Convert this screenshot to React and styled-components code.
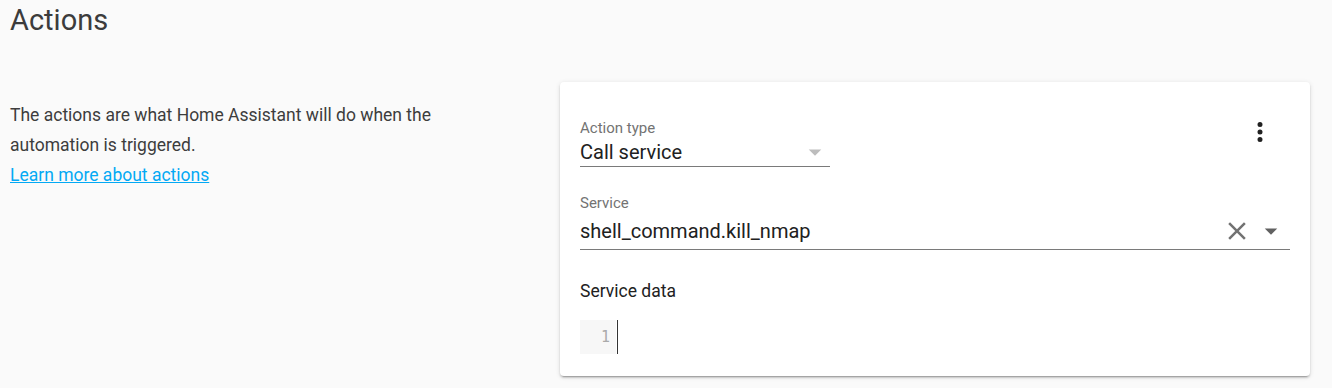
import React from 'react';
import styled, { createGlobalStyle } from 'styled-components';

const GlobalStyle = createGlobalStyle`
    body {
        margin: 0;
        background: #fafafa;
        font-family: Roboto, 'Liberation Sans', sans-serif;
    }
`

const DotsIcon = () => (
    <svg width="30" height="30" viewBox="0 0 24 24">
        <path fill="#212121" d="M12,16A2,2 0 0,1 14,18A2,2 0 0,1 12,20A2,2 0 0,1 10,18A2,2 0 0,1 12,16M12,10A2,2 0 0,1 14,12A2,2 0 0,1 12,14A2,2 0 0,1 10,12A2,2 0 0,1 12,10M12,4A2,2 0 0,1 14,6A2,2 0 0,1 12,8A2,2 0 0,1 10,6A2,2 0 0,1 12,4Z" />
    </svg>
)

const CloseIcon = () => (
    <svg width="30" height="30" viewBox="0 0 24 24">
        <path fill="#727272" d="M19,6.41L17.59,5L12,10.59L6.41,5L5,6.41L10.59,12L5,17.59L6.41,19L12,13.41L17.59,19L19,17.59L13.41,12L19,6.41Z" />
    </svg>
)

const ArrowIcon = ({ color }) => (
    <svg width="30" height="30" viewBox="0 0 24 24">
        <path fill={color} d="M7,10L12,15L17,10H7Z" />
    </svg>
)

const App = () => {
    return (
        <Page>
            <GlobalStyle />
            <Title>Actions</Title>
            <Section>
                <Intro>
                    The actions are what Home Assistant will do when the automation is triggered.
                    <br />
                    <Link href="#">Learn more about actions</Link>
                </Intro>
                <Card>
                    <TopRow>
                        <Field width="250px">
                            <Label>Action type</Label>
                            <InputRow height="28px">
                                <Value>Call service</Value>
                                <ArrowIcon color="#bdbdbd" />
                            </InputRow>
                        </Field>
                        <MenuButton><DotsIcon /></MenuButton>
                    </TopRow>
                    <Field width="100%" top="26px">
                        <Label>Service</Label>
                        <InputRow height="36px">
                            <Value>shell_command.kill_nmap</Value>
                            <IconGroup>
                                <CloseIcon />
                                <ArrowIcon color="#616161" />
                            </IconGroup>
                        </InputRow>
                    </Field>
                    <SubHeading>Service data</SubHeading>
                    <Editor>
                        <Gutter>1</Gutter>
                        <Cursor />
                    </Editor>
                </Card>
            </Section>
        </Page>
    )
};

export default App;

const Page = styled.div`
    padding: 0 22px 12px 10px;
`

const Title = styled.h1`
    margin: 0;
    font-size: 29px;
    font-weight: 400;
    line-height: 40px;
    color: #3c3c3c;
`

const Section = styled.div`
    display: grid;
    grid-template-columns: 550px 1fr;
    margin-top: 42px;
`

const Intro = styled.div`
    max-width: 470px;
    padding-top: 18px;
    font-size: 17.5px;
    line-height: 30px;
    color: #3d3d3d;
`

const Link = styled.a`
    color: #03a9f4;
    text-decoration: underline;
`

const Card = styled.div`
    background: #fff;
    border-radius: 4px;
    box-shadow: 0 2px 2px 0 rgba(0,0,0,.14), 0 1px 5px 0 rgba(0,0,0,.12), 0 3px 1px -2px rgba(0,0,0,.2);
    padding: 36px 20px 22px 20px;
`

const TopRow = styled.div`
    display: flex;
    justify-content: space-between;
    align-items: flex-start;
`

const MenuButton = styled.div`
    width: 60px;
    height: 60px;
    margin-top: -16px;
    display: flex;
    align-items: center;
    justify-content: center;
`

const Field = styled.div`
    width: ${p => p.width};
    margin-top: ${p => p.top || 0};
    border-bottom: 1px solid #7a7a7a;
`

const Label = styled.div`
    font-size: 15px;
    line-height: 20px;
    color: #737373;
`

const InputRow = styled.div`
    display: flex;
    align-items: center;
    justify-content: space-between;
    height: ${p => p.height};
`

const Value = styled.div`
    font-size: 20px;
    color: #212121;
`

const IconGroup = styled.div`
    display: flex;
    gap: 4px;
    margin-right: 4px;
`

const SubHeading = styled.div`
    margin-top: 29px;
    font-size: 17.5px;
    line-height: 24px;
    color: #212121;
`

const Editor = styled.div`
    display: flex;
    margin-top: 17px;
    height: 34px;
`

const Gutter = styled.div`
    width: 36px;
    box-sizing: border-box;
    padding-right: 6px;
    background: #f7f7f7;
    text-align: right;
    font-family: 'DejaVu Sans Mono', monospace;
    font-size: 15px;
    line-height: 34px;
    color: #aaa;
`

const Cursor = styled.div`
    width: 1px;
    margin-left: 1px;
    background: #333;
`
